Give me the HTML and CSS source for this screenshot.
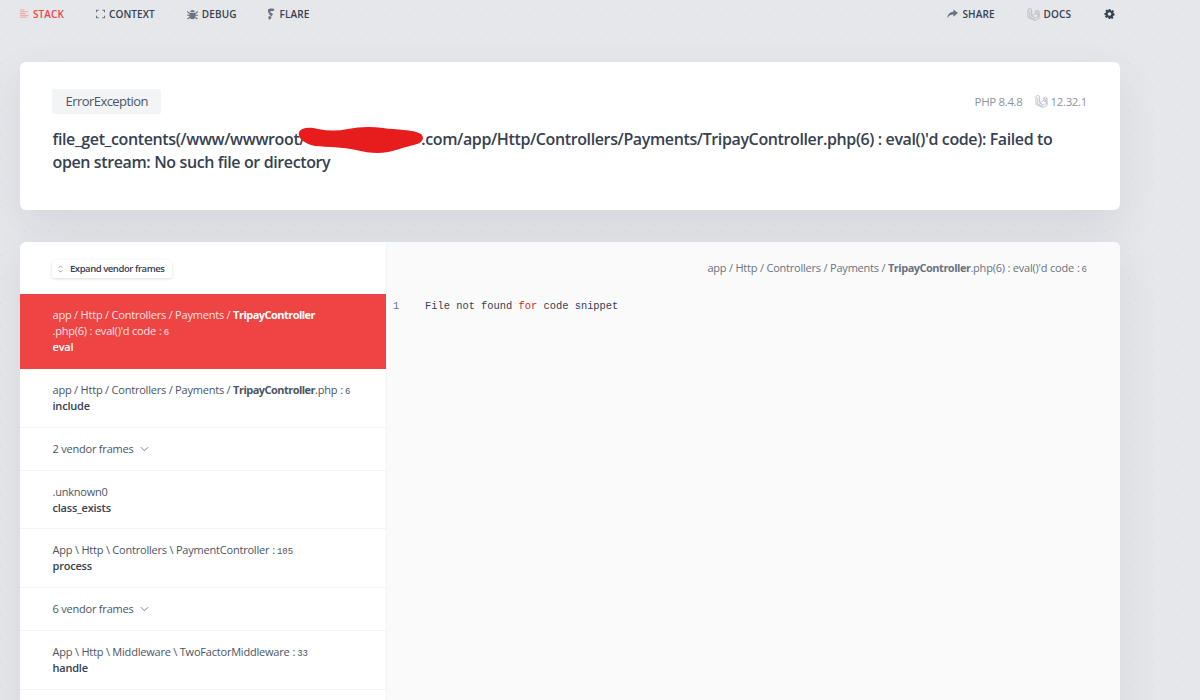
FILE: index.html
```html
<!DOCTYPE html>
<html lang="en">
<head>
<meta charset="utf-8">
<title>ErrorException</title>
<link rel="stylesheet" href="styles.css">
</head>
<body>
<div class="page">
  <nav class="nav">
    <div class="nav-group">
      <a class="nav-item active">
        <svg class="ico" viewBox="0 0 10 10"><path d="M0 .5h5M0 2.500h9M0 4.500h6M0 6.500h9.500M0 8.500h8" stroke="#f0a0a0" stroke-width="1" fill="none"/></svg>
        STACK</a>
      <a class="nav-item item-context">
        <svg class="ico" viewBox="0 0 10 10"><path d="M.5 3V.8H3M7 .8h2.500V3M9.500 7v2.200H7M3 9.200H.5V7" stroke="#6b7280" stroke-width="1.200" fill="none"/></svg>
        CONTEXT</a>
      <a class="nav-item item-debug">
        <svg class="ico ico-l" viewBox="0 0 12 12"><path d="M3.500 3.800a2.500 2.300 0 0 1 5 0zM2.800 4.600h6.400v3.900a3.200 3.200 0 0 1-6.400 0zM.3 2.600l2.900 2.300-.8 1L-.4 3.600zM11.700 2.600L8.800 4.900l.8 1 2.800-2.300zM0 6.800h3v1.200H0zM9 6.800h3V8H9zM.2 11L3 8.800l.7 1-2.600 2.200zM11.800 11L9 8.800l-.7 1 2.600 2.200z" fill="#6b7280"/></svg>
        DEBUG</a>
      <a class="nav-item item-flare">
        <svg class="ico ico-t" viewBox="0 0 8 12"><path d="M1 1.500L3 .5h3l1.500 1-1 1.500H4L3 4.500l2 .5 1 1.500L4.500 8 3 7.500 2 5.500 1 4zM1.500 8.300h2.500l.5 1.200-1.500 2.200-1.500-.5z" fill="#6b7280"/></svg>
        FLARE</a>
    </div>
    <div class="nav-group nav-right">
      <a class="nav-item item-share">
        <svg class="ico ico-l" viewBox="0 0 12 10"><path d="M7 0l5 4-5 4V5.500C4 5.500 2 6.500 .5 9.500.5 5.500 3 2.800 7 2.500z" fill="#6b7280"/></svg>
        SHARE</a>
      <a class="nav-item item-docs">
        <svg class="ico ico-d" viewBox="0 0 14 14"><use href="#laravel"/></svg>
        DOCS</a>
      <a class="nav-item item-gear">
        <svg class="ico ico-l" viewBox="0 0 24 24"><path fill="#374151" fill-rule="evenodd" d="M10 1h4l.6 3.100 1.900.8 2.600-1.800 2.800 2.800-1.800 2.600.8 1.900L23 11v4l-3.100.6-.8 1.900 1.800 2.600-2.800 2.800-2.600-1.800-1.900.8L13 23h-3l-.6-3.100-1.900-.8-2.600 1.800-2.800-2.800 1.800-2.600-.8-1.900L1 14v-4l3.100-.6.8-1.900-1.800-2.600 2.800-2.800 2.600 1.800 1.900-.8zM12 8a4 4 0 1 0 0 8 4 4 0 0 0 0-8z"/></svg>
      </a>
    </div>
  </nav>

  <svg class="defs" width="0" height="0">
    <symbol id="laravel" viewBox="0 0 14 14">
      <path d="M1 1.500l2-1 2 1v7l4 2.300 4-2.300V6M1 1.500v8.700l8 3.300 4-2.300V8M3 2.700v6.800l6 3M5 8.500L9 6.200l4 1.800M9 6.200V3.500l2-1.200 2 1.200V6l-2 1M9 3.500l2 1.200 2-1.200M11 4.700V7" fill="none" stroke="#b4b9c2" stroke-width=".9"/>
    </symbol>
  </svg>

  <section class="card summary">
    <div class="summary-top">
      <span class="badge">ErrorException</span>
      <span class="versions">PHP 8.4.8
        <svg class="ico-ver" viewBox="0 0 14 14"><use href="#laravel"/></svg>
        12.32.1</span>
    </div>
    <h1 class="title">file_get_contents(/www/wwwroot/<span class="redacted"></span>.com/app/Http/Controllers/Payments/TripayController.php(6) : eval()'d code): Failed to<br>open stream: No such file or directory</h1>
    <svg class="scribble" viewBox="0 0 126 28"><path d="M1 6C4 1 12 1 20 3C30 5 40 5 50 3C60 1 72 0 85 2C98 4 115 3 123 8C127 12 125 17 116 19C106 21 100 24 90 26C80 28 70 27 58 24C44 21 30 21 17 20C8 18-1 13 1 6z" fill="#e71c1c"/></svg>
  </section>

  <section class="card stack">
    <aside class="frames">
      <div class="frames-head">
        <button class="expand">
          <svg class="ico-exp" viewBox="0 0 8 12"><path d="M1 4l3-3 3 3M1 8l3 3 3-3" fill="none" stroke="#6b7280" stroke-width="1"/></svg>
          Expand vendor frames</button>
      </div>
      <div class="frame selected">
        <div class="path">app / Http / Controllers / Payments / <b>TripayController</b><br>.php(6) : eval()'d code<span class="sep">:</span><span class="ln">6</span></div>
        <div class="fn">eval</div>
      </div>
      <div class="frame">
        <div class="path">app / Http / Controllers / Payments / <b>TripayController</b>.php<span class="sep">:</span><span class="ln">6</span></div>
        <div class="fn">include</div>
      </div>
      <div class="vendor">2 vendor frames
        <svg class="chev" viewBox="0 0 10 6"><path d="M1 1l4 4 4-4" fill="none" stroke="#6b7280" stroke-width="1"/></svg>
      </div>
      <div class="frame">
        <div class="path">.unknown0</div>
        <div class="fn">class_exists</div>
      </div>
      <div class="frame">
        <div class="path">App \ Http \ Controllers \ PaymentController<span class="sep">:</span><span class="ln">105</span></div>
        <div class="fn">process</div>
      </div>
      <div class="vendor">6 vendor frames
        <svg class="chev" viewBox="0 0 10 6"><path d="M1 1l4 4 4-4" fill="none" stroke="#6b7280" stroke-width="1"/></svg>
      </div>
      <div class="frame">
        <div class="path">App \ Http \ Middleware \ TwoFactorMiddleware<span class="sep">:</span><span class="ln">33</span></div>
        <div class="fn">handle</div>
      </div>
      <div class="frame"></div>
    </aside>
    <main class="code">
      <div class="code-head">app / Http / Controllers / Payments / <b>TripayController</b>.php(6) : eval()'d code<span class="sep">:</span><span class="ln">6</span></div>
      <div class="code-line"><span class="num">1</span><span class="src">File not found <span class="kw">for</span> code snippet</span></div>
    </main>
  </section>
</div>
</body>
</html>
```
FILE: styles.css
```css
* { box-sizing: border-box; }
html, body { margin: 0; height: 100%; overflow: hidden; }
body {
  background-color: #e5e7eb;
  background-image: radial-gradient(circle at 0.5px 0.5px, #d6d9df 1px, transparent 1px);
  background-size: 24px 24px;
  background-position: 0 15px;
  font-family: "Open Sans", "Noto Sans", sans-serif;
  color: #374151;
}
.page { width: 1120px; padding-left: 20px; }
.defs { position: absolute; }
.nav { display: flex; justify-content: space-between; height: 62px; padding-top: 7px; }
.nav-group { display: flex; height: 14px; }
.nav-item {
  display: flex; align-items: center; gap: 4px;
  font-size: 10px; line-height: 14px; font-weight: 600; letter-spacing: .1px;
  color: #374151;
}
.nav-item.active { color: #ef4444; }
.item-context { margin-left: 32px; }
.item-debug { margin-left: 32px; }
.item-flare { margin-left: 30px; margin-top: -1px; gap: 5px; }
.item-docs { margin-left: 32px; }
.item-gear { margin-left: 33px; margin-right: 5px; }
.ico { width: 9px; height: 10px; display: block; }
.ico-l { width: 11px; height: 12px; }
.ico-t { width: 8px; height: 12px; }
.ico-d { width: 13px; height: 13px; }

.card { background: #fff; border-radius: 6px; box-shadow: 0 16px 40px rgba(75,85,99,.11); width: 1100px; position: relative; }
.summary { height: 148px; padding: 27px 32px 0; margin-bottom: 32px; }
.summary-top { display: flex; justify-content: space-between; align-items: center; height: 25px; }
.badge { background: #f3f4f6; border-radius: 2px; height: 25px; padding: 0 13px 0 13.500px; font-size: 13px; line-height: 25px; letter-spacing: -.55px; color: #4b5563; }
.versions { font-size: 11.500px; letter-spacing: -.35px; color: #8d94a1; display: flex; align-items: center; gap: 3px; margin-right: 1px; }
.ico-ver { width: 13px; height: 13px; margin-left: 9px; }
.title { margin: 14px 0 0 .5px; font-size: 16px; line-height: 23px; font-weight: 600; letter-spacing: -.38px; color: #374151; }
.redacted { display: inline-block; width: 116px; }
.scribble { position: absolute; left: 278px; top: 64px; width: 126px; height: 28px; }

.stack { display: flex; height: 480px; overflow: hidden; }
.frames { width: 367px; flex: none; border-right: 1px solid #f3f4f6; }
.frames-head { height: 52px; padding: 18px 0 0 32px; }
.expand {
  display: flex; align-items: center; gap: 7px; height: 18px; padding: 0 8px 0 6px;
  background: #fff; border: 0; border-radius: 2px; box-shadow: 0 1px 3px rgba(0,0,0,.14);
  font: 600 9.500px/18px "Open Sans", "Noto Sans", sans-serif; letter-spacing: -.45px; color: #374151;
}
.ico-exp { width: 5px; height: 8px; }
.frame { padding: 13px 32px 12.750px 32.500px; min-height: 58.750px; border-bottom: 1px solid #f3f4f6; font-size: 11px; line-height: 16px; letter-spacing: -.21px; color: #4b5563; }
.path b { font-weight: 700; letter-spacing: -.53px; }
.fn { font-weight: 600; color: #374151; }
.sep { margin: 0 2px 0 3px; }
.ln { font-family: "Liberation Mono", monospace; font-size: 9px; line-height: 0; letter-spacing: 0; }
.selected { background: #ef4444; color: #fee2e2; padding: 13px 32px 14px 32.500px; min-height: 0; border-bottom: 0; }
.selected b, .selected .fn { color: #fff; }
.vendor { height: 42.750px; padding-left: 32.500px; display: flex; align-items: center; gap: 6px; border-bottom: 1px solid #f3f4f6; font-size: 11px; letter-spacing: -.21px; color: #4b5563; }
.chev { width: 9px; height: 6px; }
.code { flex: 1; background: #fafafa; font-size: 11px; letter-spacing: -.21px; }
.code-head { height: 52px; padding: 18px 33px 0 0; text-align: right; line-height: 16px; color: #6b7280; }
.code-head b { font-weight: 700; letter-spacing: -.5px; }
.code-line { display: flex; font-family: "Liberation Mono", monospace; font-size: 10.400px; letter-spacing: 0; line-height: 16px; color: #374151; padding-left: 6px; margin-top: 4px; }
.num { width: 32px; color: #6b7280; }
.kw { color: #dc2626; }
```
